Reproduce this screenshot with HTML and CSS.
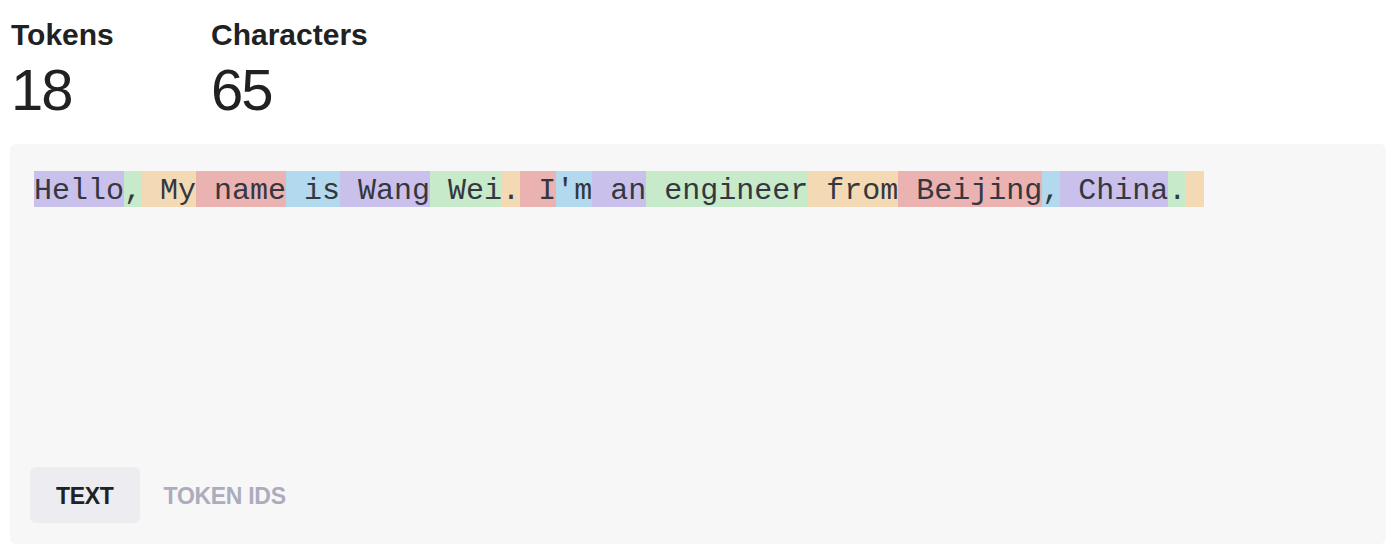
FILE: index.html
```
<!DOCTYPE html>
<html lang="en">
<head>
<meta charset="utf-8">
<title>Tokenizer</title>
<link rel="stylesheet" href="styles.css">
</head>
<body>
<div class="stats">
  <div class="stat">
    <div class="stat-label">Tokens</div>
    <div class="stat-value">18</div>
  </div>
  <div class="stat">
    <div class="stat-label">Characters</div>
    <div class="stat-value">65</div>
  </div>
</div>
<div class="panel">
  <div class="tokens"><span class="tk c0">Hello</span><span class="tk c1">,</span><span class="tk c2"> My</span><span class="tk c3"> name</span><span class="tk c4"> is</span><span class="tk c0"> Wang</span><span class="tk c1"> Wei</span><span class="tk c2">.</span><span class="tk c3"> I</span><span class="tk c4">'m</span><span class="tk c0"> an</span><span class="tk c1"> engineer</span><span class="tk c2"> from</span><span class="tk c3"> Beijing</span><span class="tk c4">,</span><span class="tk c0"> China</span><span class="tk c1">.</span><span class="tk c2"> </span></div>
  <div class="tabs">
    <button class="tab active">TEXT</button>
    <button class="tab">TOKEN IDS</button>
  </div>
</div>
</body>
</html>
```
FILE: styles.css
```
* { box-sizing: border-box; }
html, body { margin: 0; padding: 0; background: #ffffff; }
body {
  font-family: "Liberation Sans", Arial, sans-serif;
  color: #202123;
  width: 1394px;
  height: 552px;
  overflow: hidden;
}
.stats {
  display: grid;
  grid-template-columns: 200px auto;
  padding: 18px 0 0 11px;
}
.stat-label {
  font-size: 30px;
  line-height: 34px;
  font-weight: 700;
  letter-spacing: 0;
}
.stat-value {
  margin-top: 6px;
  font-size: 58px;
  line-height: 64px;
  font-weight: 400;
  letter-spacing: -2px;
}
.panel {
  margin: 22px 8px 8px 10px;
  height: 400px;
  background: #f7f7f8;
  border-radius: 6px;
  display: flex;
  flex-direction: column;
}
.tokens {
  padding: 27px 24px 0;
  font-family: "Liberation Mono", "Courier New", monospace;
  font-size: 30px;
  color: #353740;
  white-space: pre;
}
.tk {
  display: inline-block;
  white-space: pre;
  height: 36px;
  padding-top: 4px;
  line-height: 32px;
  vertical-align: top;
}
.c0 { background: #c9c1eb; }
.c1 { background: #c7eacb; }
.c2 { background: #f3dab4; }
.c3 { background: #ebb2b2; }
.c4 { background: #b3d9ee; }
.tabs {
  margin-top: auto;
  display: flex;
  padding: 0 0 21px 20px;
}
.tab {
  font-family: "Liberation Sans", Arial, sans-serif;
  font-size: 23px;
  font-weight: 700;
  letter-spacing: -0.3px;
  height: 56px;
  padding: 2px 26px 0;
  line-height: 54px;
  border: none;
  border-radius: 6px;
  background: transparent;
  color: #acacbe;
  cursor: pointer;
}
.tab + .tab {
  margin-left: -2px;
}
.tab.active {
  background: #ececf1;
  color: #202123;
}
```
